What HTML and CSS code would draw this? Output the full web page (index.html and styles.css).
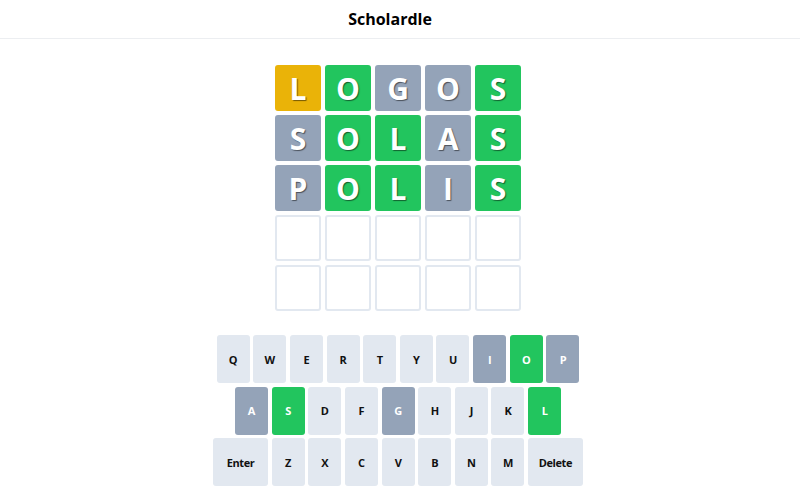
FILE: index.html
```html
<!doctype html>
<html lang="en">
<head>
	<meta charset="UTF-8">
	<title>Scholardle</title>
	<link rel="stylesheet" href="styles.css">
</head>
<body>
	<div class="navbar">
		<h1 class="title">Scholardle</h1>
	</div>
	<div class="main">
		<div class="grid">
			<div class="row">
				<div class="cell present">L</div>
				<div class="cell correct">O</div>
				<div class="cell absent">G</div>
				<div class="cell absent">O</div>
				<div class="cell correct">S</div>
			</div>
			<div class="row">
				<div class="cell absent">S</div>
				<div class="cell correct">O</div>
				<div class="cell correct">L</div>
				<div class="cell absent">A</div>
				<div class="cell correct">S</div>
			</div>
			<div class="row">
				<div class="cell absent">P</div>
				<div class="cell correct">O</div>
				<div class="cell correct">L</div>
				<div class="cell absent">I</div>
				<div class="cell correct">S</div>
			</div>
			<div class="row">
				<div class="cell"></div>
				<div class="cell"></div>
				<div class="cell"></div>
				<div class="cell"></div>
				<div class="cell"></div>
			</div>
			<div class="row">
				<div class="cell"></div>
				<div class="cell"></div>
				<div class="cell"></div>
				<div class="cell"></div>
				<div class="cell"></div>
			</div>
		</div>

		<div class="keyboard">
			<div class="key-row">
				<button class="key">Q</button>
				<button class="key">W</button>
				<button class="key">E</button>
				<button class="key">R</button>
				<button class="key">T</button>
				<button class="key">Y</button>
				<button class="key">U</button>
				<button class="key absent">I</button>
				<button class="key correct">O</button>
				<button class="key absent">P</button>
			</div>
			<div class="key-row">
				<button class="key absent">A</button>
				<button class="key correct">S</button>
				<button class="key">D</button>
				<button class="key">F</button>
				<button class="key absent">G</button>
				<button class="key">H</button>
				<button class="key">J</button>
				<button class="key">K</button>
				<button class="key correct">L</button>
			</div>
			<div class="key-row">
				<button class="key wide">Enter</button>
				<button class="key">Z</button>
				<button class="key">X</button>
				<button class="key">C</button>
				<button class="key">V</button>
				<button class="key">B</button>
				<button class="key">N</button>
				<button class="key">M</button>
				<button class="key wide">Delete</button>
			</div>
		</div>
	</div>
</body>
</html>
```

FILE: styles.css
```css
body {
	margin: 0;
	font-family: "Open Sans", "Noto Sans", sans-serif;
	color: #000;
	background: #fff;
}
.navbar {
	height: 38px;
	border-bottom: 1px solid #eceef1;
	display: flex;
	align-items: center;
	justify-content: center;
	padding-right: 20px;
}
.title {
	margin: 0;
	font-size: 16px;
	font-weight: 700;
}
.main {
	padding: 26px 4px 0 0;
	display: flex;
	flex-direction: column;
	align-items: center;
}
.grid {
	display: flex;
	flex-direction: column;
	gap: 4px;
}
.row {
	display: flex;
	gap: 4px;
}
.cell {
	width: 46px;
	height: 46px;
	box-sizing: border-box;
	border: 2px solid #e2e8f0;
	border-radius: 3px;
	display: flex;
	align-items: center;
	justify-content: center;
	font-size: 30px;
	font-weight: 700;
	color: #fff;
	text-shadow: 1px 1px 1px rgba(0, 0, 0, 0.5);
}
.cell.correct {
	background: #22c55e;
	border-color: #22c55e;
}
.cell.present {
	background: #eab308;
	border-color: #eab308;
}
.cell.absent {
	background: #94a3b8;
	border-color: #94a3b8;
}
.keyboard {
	margin-top: 24px;
	display: flex;
	flex-direction: column;
	align-items: center;
	gap: 3.5px;
}
.key-row {
	display: flex;
	gap: 3.67px;
}
.key {
	width: 33px;
	height: 48px;
	border: 0;
	border-radius: 3px;
	padding: 0;
	background: #e2e8f0;
	font-family: "Open Sans", "Noto Sans", sans-serif;
	font-size: 11px;
	font-weight: 700;
	letter-spacing: -0.4px;
	color: #111;
}
.key.wide {
	width: 54.5px;
}
.key.correct {
	background: #22c55e;
	color: #fff;
}
.key.absent {
	background: #94a3b8;
	color: #fff;
}
```
